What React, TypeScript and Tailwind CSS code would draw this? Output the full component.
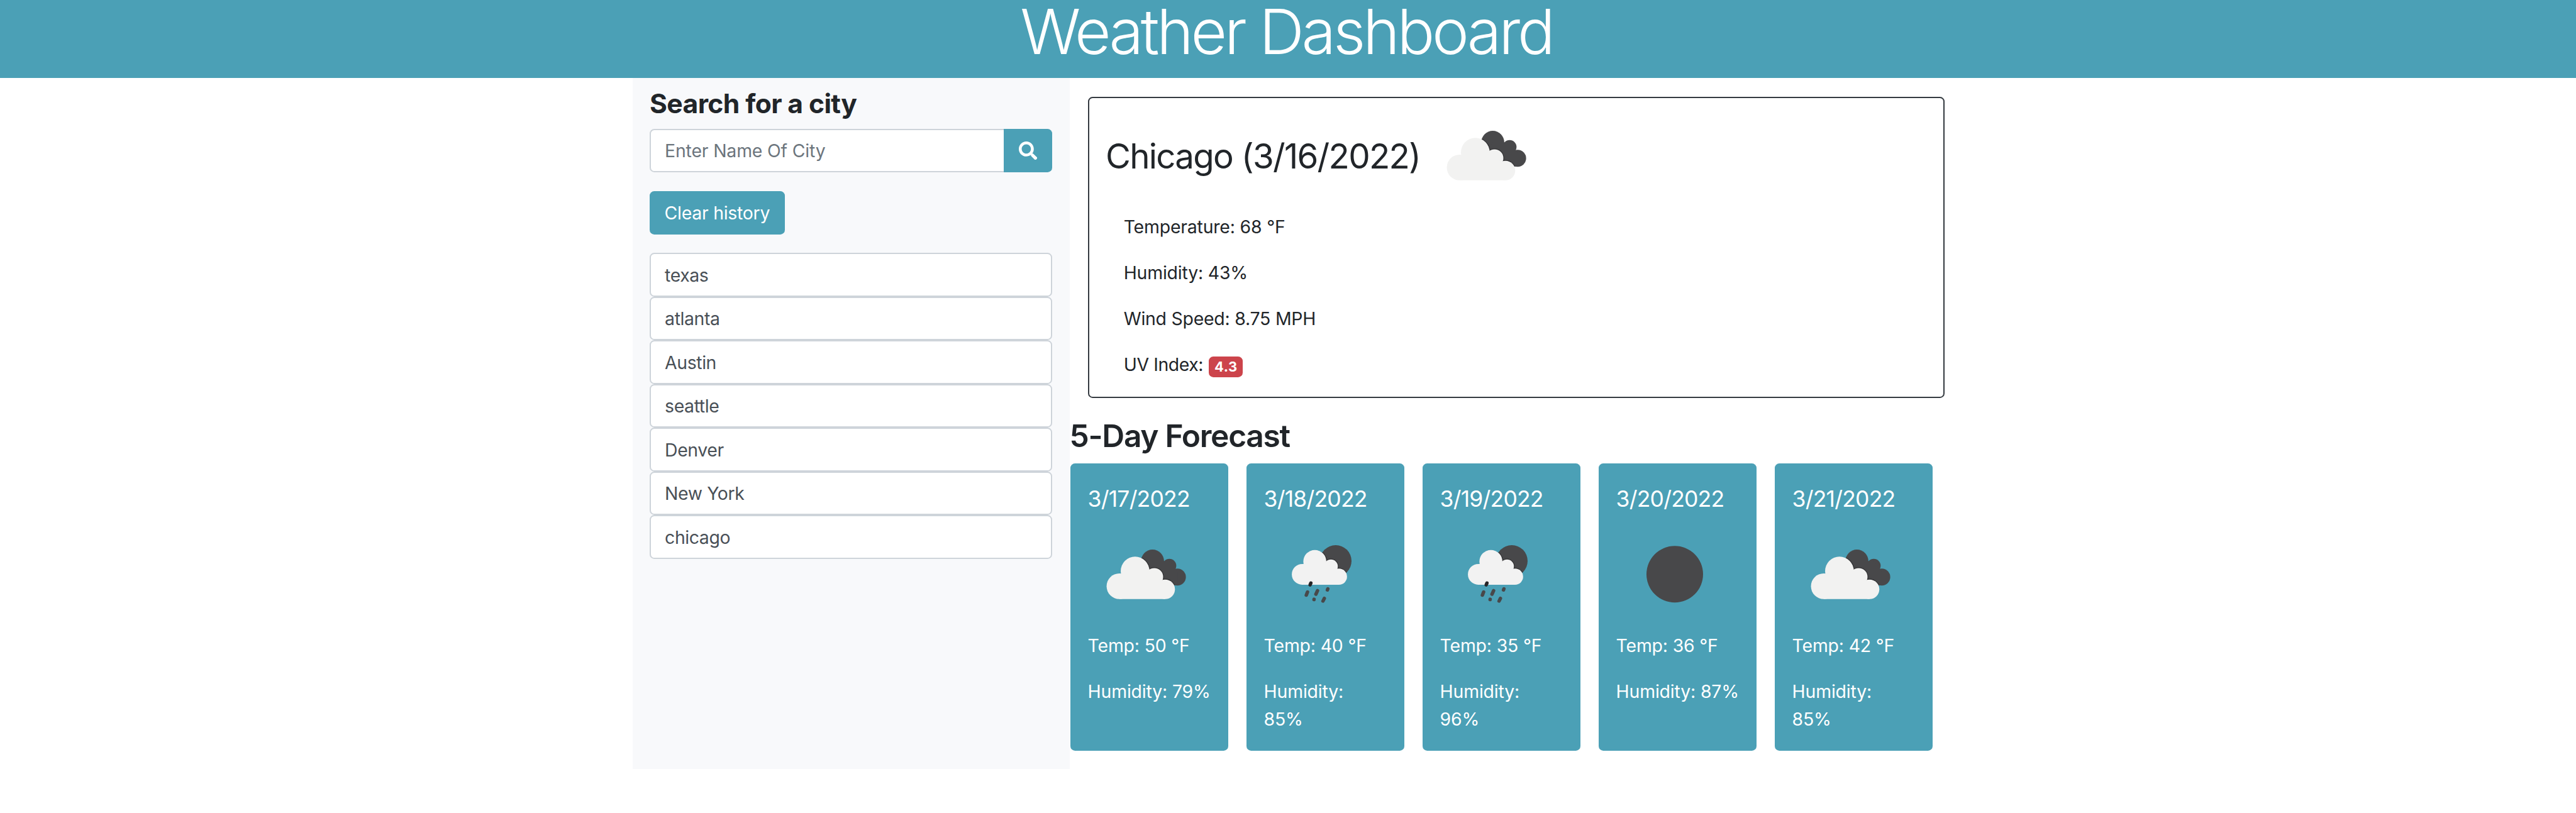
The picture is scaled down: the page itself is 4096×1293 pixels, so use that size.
import { FaSearch } from "react-icons/fa";

const history = ["texas", "atlanta", "Austin", "seattle", "Denver", "New York", "chicago"];

type IconKind = "clouds" | "rain" | "moon";

const forecast: { date: string; icon: IconKind; temp: number; humidity: number; wrap: boolean }[] = [
  { date: "3/17/2022", icon: "clouds", temp: 50, humidity: 79, wrap: false },
  { date: "3/18/2022", icon: "rain", temp: 40, humidity: 85, wrap: true },
  { date: "3/19/2022", icon: "rain", temp: 35, humidity: 96, wrap: true },
  { date: "3/20/2022", icon: "moon", temp: 36, humidity: 87, wrap: false },
  { date: "3/21/2022", icon: "clouds", temp: 42, humidity: 85, wrap: true },
];

function BrokenClouds({ id }: { id: string }) {
  const back = (
    <>
      <circle cx="110" cy="77" r="20" />
      <circle cx="139.3" cy="85" r="12" />
      <circle cx="153.3" cy="104.7" r="14.7" />
      <path d="M110 77L139.3 77L153.3 95L153.3 119L125 118L98 95Z" />
    </>
  );
  const front = (
    <>
      <circle cx="52.3" cy="120.7" r="22.2" />
      <circle cx="79.7" cy="94.3" r="25" />
      <circle cx="113" cy="104.5" r="15.5" />
      <circle cx="132" cy="126" r="17" />
      <path d="M52.3 142.9V99H57L113 105L132 112V142.9Z" />
    </>
  );
  return (
    <>
      <clipPath id={id}>{back}</clipPath>
      <g fill="#48484a">{back}</g>
      <g clipPath={`url(#${id})`} fill="#2f2f31" stroke="#2f2f31" strokeWidth="2.6">
        {front}
      </g>
      <g fill="#f2f2f1">{front}</g>
    </>
  );
}

function RainNight({ id }: { id: string }) {
  const front = (
    <>
      <circle cx="64" cy="100" r="18" />
      <circle cx="86" cy="77.7" r="20" />
      <circle cx="114" cy="86" r="12" />
      <circle cx="128" cy="104" r="14" />
      <path d="M64 118V82H68L114 85L128 92V118Z" />
    </>
  );
  return (
    <>
      <clipPath id={id}>
        <circle cx="122.3" cy="76.7" r="27.5" />
      </clipPath>
      <circle cx="122.3" cy="76.7" r="27.5" fill="#48484a" />
      <g clipPath={`url(#${id})`} fill="#2f2f31" stroke="#2f2f31" strokeWidth="2.4">
        {front}
      </g>
      <g fill="#f2f2f2">{front}</g>
      <g stroke="#48484a" strokeWidth="6" strokeLinecap="round">
        <path d="M79.1 115.2L77.9 118.2" stroke="#262628" />
        <path d="M73.3 130.8L71.2 136.1" />
        <path d="M90.7 128.4L87.9 134.5" />
        <path d="M108.6 125.2L107.9 127" />
        <path d="M84.7 143.4L84.6 143.9" />
        <path d="M102.5 141.8L100.2 146.4" />
      </g>
    </>
  );
}

function WeatherIcon({ kind, id, className }: { kind: IconKind; id: string; className: string }) {
  return (
    <svg viewBox="0 0 200 200" className={className}>
      {kind === "clouds" && <BrokenClouds id={id} />}
      {kind === "rain" && <RainNight id={id} />}
      {kind === "moon" && <circle cx="99.5" cy="99.8" r="49.2" fill="#48484a" />}
    </svg>
  );
}

export default function App() {
  return (
    <div className="h-[1293px] bg-white font-['Inter','Liberation_Sans',sans-serif] text-[28.4px] leading-[43.9px] tracking-[-0.17px] text-[#212529]">
      <header className="h-[124.3px] bg-[#4ba0b6] pr-[5px] text-center">
        <h1 className="text-[99.4px] font-light leading-[101px] tracking-[-4.19px] text-white">Weather Dashboard</h1>
      </header>

      <div className="mx-auto flex w-[2084.6px]">
        <aside className="h-[1099px] w-[694.9px] shrink-0 bg-[#f8f9fb] px-[27.4px] pt-[14.6px]">
          <h2 className="mb-[13.2px] text-[42.6px] font-bold leading-[52.7px] tracking-[-0.61px]">Search for a city</h2>
          <div className="flex h-[69.5px]">
            <div className="flex flex-1 items-center rounded-l-[7.3px] border-2 border-r-0 border-[#ced4da] bg-white pl-[22px] pt-px text-[#6c757d]">
              Enter Name Of City
            </div>
            <button className="flex w-[77px] items-center justify-center rounded-r-[7.3px] bg-[#4ba0b6] text-white">
              <FaSearch className="size-[29.3px]" />
            </button>
          </div>
          <button className="my-[29.3px] flex h-[69.5px] w-[215px] items-center rounded-[7.3px] bg-[#4ba0b6] pl-[23.5px] pt-px tracking-[-0.25px] text-white">
            Clear history
          </button>
          <ul className="flex flex-col">
            {history.map((city) => (
              <li
                key={city}
                className="flex h-[69.5px] items-center rounded-[7.3px] border-2 border-[#ced4da] bg-white pl-[22px] pt-px tracking-[-0.4px] text-[#495057]"
              >
                {city}
              </li>
            ))}
          </ul>
        </aside>

        <main className="min-w-0 flex-1">
          <section className="ml-[29.2px] mt-[29.3px] h-[479px] w-[1362.3px] rounded-[7.3px] border-2 border-[#343a40] pl-[26.2px]">
            <div className="flex h-[183.6px] items-center">
              <h2 className="w-[515px] whitespace-nowrap pt-[2px] text-[54.6px] font-normal leading-[70px] tracking-[-1.7px]">Chicago (3/16/2022)</h2>
              <WeatherIcon kind="clouds" id="current" className="size-[182.9px]" />
            </div>
            <div className="flex flex-col gap-[29.2px] pl-[28.7px]">
              <p>Temperature: 68 °F</p>
              <p>Humidity: 43%</p>
              <p className="tracking-[-0.22px]">Wind Speed: 8.75 MPH</p>
              <p className="flex">
                <span className="w-[135.8px] tracking-[-0.4px]">UV Index:</span>
                <span className="mt-[8.5px] flex h-[33px] w-[54px] items-center justify-center rounded-[7.3px] bg-[#cc444b] text-[21.9px] font-bold leading-none tracking-[0.6px] text-white">
                  4.3
                </span>
              </p>
            </div>
          </section>

          <h3 className="mb-[12.3px] mt-[30.5px] text-[49.7px] font-semibold leading-[61.4px] tracking-[-1.3px]">5-Day Forecast</h3>
          <div className="ml-[1.8px] flex gap-[29.5px]">
            {forecast.map((day) => (
              <article key={day.date} className="h-[457.1px] w-[250.5px] shrink-0 rounded-[7.3px] bg-[#4ba0b6] pl-[27.2px] pt-[35.4px] text-white">
                <h4 className="text-[35.5px] leading-[43.9px] tracking-[-0.8px]">{day.date}</h4>
                <WeatherIcon kind={day.icon} id={`d${day.date.replace(/\//g, "-")}`} className="ml-[2.1px] mt-[5.8px] size-[182.9px]" />
                <p className="mb-[29.2px]">Temp: {day.temp} °F</p>
                <p className="whitespace-nowrap tracking-[-0.15px]">
                  Humidity:{day.wrap ? <br /> : " "}
                  {day.humidity}%
                </p>
              </article>
            ))}
          </div>
        </main>
      </div>
    </div>
  );
}
